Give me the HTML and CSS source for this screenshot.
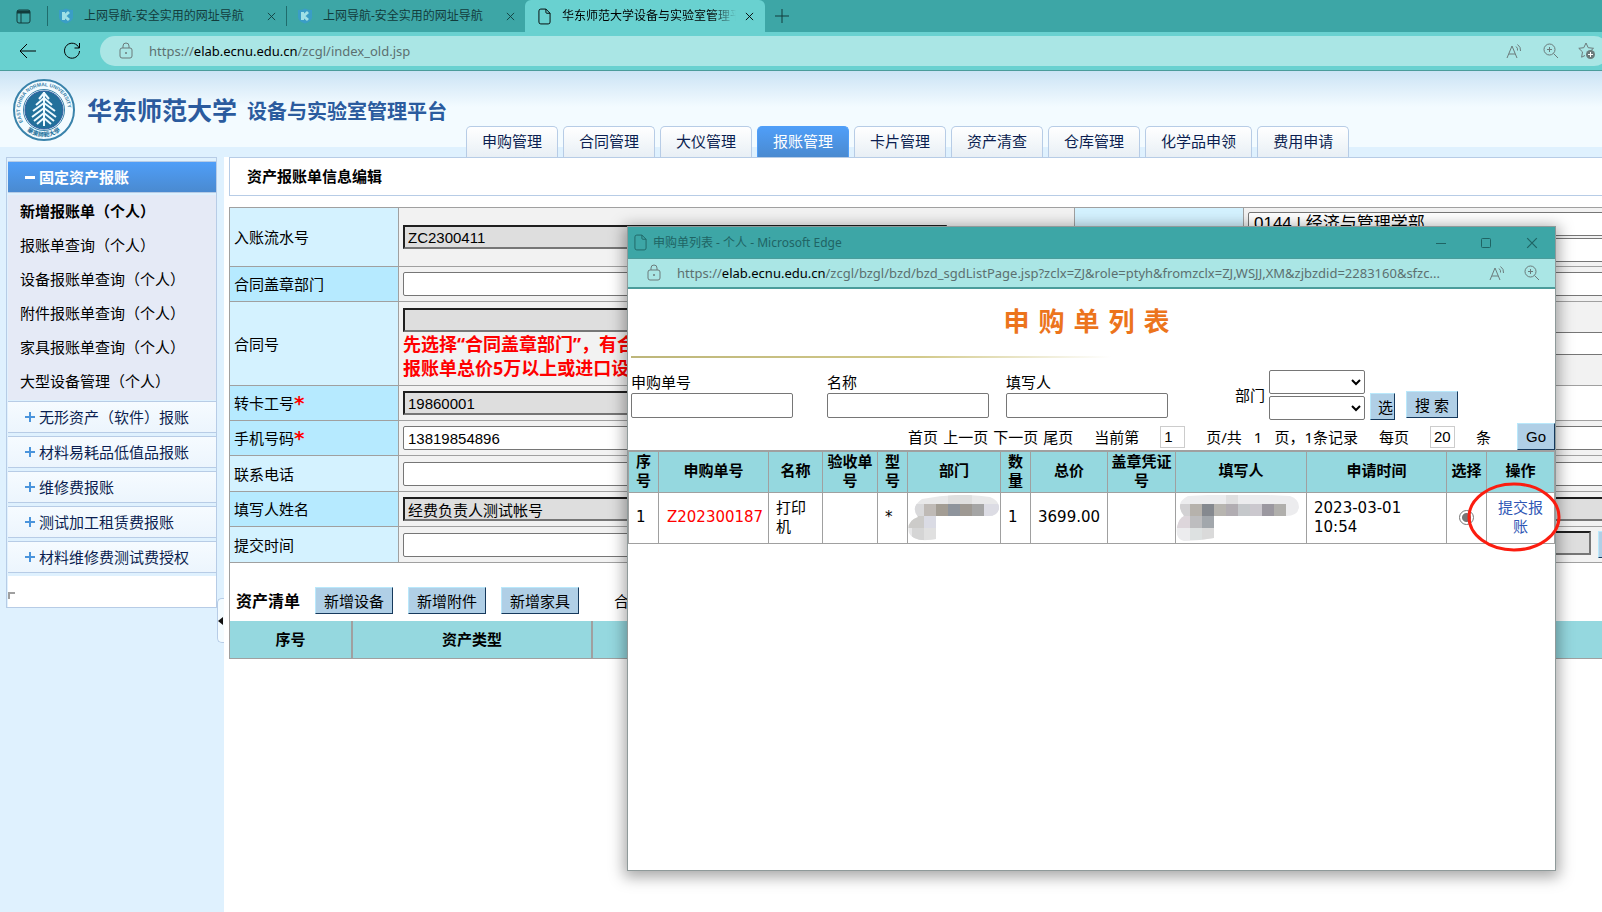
FILE: index.html
```
<!DOCTYPE html>
<html lang="zh-CN">
<head>
    <meta charset="UTF-8">
    <meta name="viewport" content="width=device-width, initial-scale=1.0">
    <title>华东师范大学设备与实验室管理平台</title>
    <link rel="stylesheet" href="styles.css">
</head>
<body>
    <svg class="defs" aria-hidden="true">
        <symbol id="i-close" viewBox="0 0 10 10"><path d="M1 1l8 8M9 1l-8 8"/></symbol>
        <symbol id="i-page" viewBox="0 0 14 18"><path d="M3 1h5.500l4.500 4.500V15a2 2 0 0 1-2 2H3a2 2 0 0 1-2-2V3a2 2 0 0 1 2-2zM8.500 1v3.500a1 1 0 0 0 1 1H13"/></symbol>
        <symbol id="i-lock" viewBox="0 0 14 18"><rect x="1" y="6" width="12" height="10" rx="2"/><path d="M4 6V4a3 3 0 0 1 6 0v2"/><circle cx="7" cy="11" r="1" class="solid"/></symbol>
        <symbol id="i-zoom" viewBox="0 0 16 16"><circle cx="6.500" cy="6.500" r="5.500"/><path d="M10.500 10.500L15 15M6.500 4v5M4 6.500h5"/></symbol>
        <symbol id="i-read" viewBox="0 0 18 16"><path d="M1 15L6 3l5 12M3 11h6M10 3.500q2 1.500 1.500 4M11.500 1.500q3.500 2.500 3 6.500"/></symbol>
        <symbol id="i-k" viewBox="0 0 16 16"><path class="shield" d="M1 2q4 0 7-1.500Q11 2 15 2v7q0 4-7 6.500Q1 13 1 9z"/><path class="k" d="M5.500 4v8M11 4L6.500 8l4.500 4"/></symbol>
    </svg>

    <div class="tabbar">
        <button class="tab-menu" aria-label="标签操作">
            <svg width="15" height="15" viewBox="0 0 15 15"><rect x="1" y="1" width="13" height="13" rx="2"/><path class="thick" d="M1 3h13"/><path d="M5 4v10"/></svg>
        </button>
        <div class="btab">
            <svg class="k-icon" width="16" height="16"><use href="#i-k"/></svg>
            <span>上网导航-安全实用的网址导航</span>
            <button aria-label="关闭"><svg width="9" height="9"><use href="#i-close"/></svg></button>
        </div>
        <div class="btab">
            <svg class="k-icon" width="16" height="16"><use href="#i-k"/></svg>
            <span>上网导航-安全实用的网址导航</span>
            <button aria-label="关闭"><svg width="9" height="9"><use href="#i-close"/></svg></button>
        </div>
        <div class="btab active">
            <svg width="13" height="17"><use href="#i-page"/></svg>
            <span>华东师范大学设备与实验室管理平台</span>
            <button aria-label="关闭"><svg width="9" height="9"><use href="#i-close"/></svg></button>
        </div>
        <button class="tab-add" aria-label="新建标签页"><svg width="14" height="14" viewBox="0 0 14 14"><path d="M7 0v14M0 7h14"/></svg></button>
    </div>

    <div class="toolbar">
        <button aria-label="后退"><svg width="18" height="16" viewBox="0 0 18 16"><path d="M17 8H1M8 1L1 8l7 7"/></svg></button>
        <button aria-label="刷新"><svg width="18" height="18" viewBox="0 0 18 18"><path d="M16 6A7.500 7.500 0 1 0 16.500 9M16.500 1v5h-5"/></svg></button>
        <div class="address">
            <svg width="14" height="18"><use href="#i-lock"/></svg>
            <p class="url">https://<b>elab.ecnu.edu.cn</b>/zcgl/index_old.jsp</p>
            <svg width="18" height="16"><use href="#i-read"/></svg>
            <svg width="16" height="16"><use href="#i-zoom"/></svg>
            <svg width="18" height="18" viewBox="0 0 18 18"><path d="M8 1l2.200 4.700 5.300.6-3.900 3.500M8 1L5.800 5.700.8 6.300l3.700 3.600-.9 5.300L7 13.500"/><circle class="solid" cx="12.500" cy="12.500" r="4.500"/><path class="plus" d="M12.500 10v5M10 12.500h5"/></svg>
        </div>
    </div>

    <header class="header">
        <div class="brand">
            <svg class="logo" width="62" height="62" viewBox="0 0 62 62">
                <circle cx="31" cy="31" r="30" fill="#f3fbff" stroke="#3a83ab" stroke-width="2"/>
                <circle cx="31" cy="31" r="19" fill="#22709b"/>
                <circle cx="31" cy="31" r="20.500" fill="none" stroke="#3a83ab"/>
                <path id="ring" d="M10.100 43A24 24 0 1 1 51.900 43" fill="none" stroke="none"/>
                <path id="ring2" d="M9 47A28 28 0 0 0 53 47" fill="none" stroke="none"/>
                <text class="ring-text"><textPath href="#ring">EAST CHINA NORMAL UNIVERSITY</textPath></text>
                <text class="ring-cn"><textPath href="#ring2" startOffset="7">華東師範大學</textPath></text>
                <g fill="none" stroke="#eefaff" stroke-width="2">
                    <path d="M31 13v34"/>
                    <path d="M31 14l-5 6M31 14l5 6M31 19l-8 7M31 19l8 7M31 24l-11 8M31 24l11 8M31 29l-12 9M31 29l12 9M31 34l-10 8M31 34l10 8M31 39l-7 6M31 39l7 6"/>
                </g>
            </svg>
            <h1>华东师范大学</h1>
            <h2>设备与实验室管理平台</h2>
        </div>
        <nav class="nav">
            <a href="#">申购管理</a>
            <a href="#">合同管理</a>
            <a href="#">大仪管理</a>
            <a href="#" class="on">报账管理</a>
            <a href="#">卡片管理</a>
            <a href="#">资产清查</a>
            <a href="#">仓库管理</a>
            <a href="#">化学品申领</a>
            <a href="#">费用申请</a>
        </nav>
    </header>

    <div class="main">
        <aside class="side">
            <div class="menu">
                <button class="head open"><i class="minus"></i>固定资产报账</button>
                <ul>
                    <li><a href="#" class="cur">新增报账单（个人）</a></li>
                    <li><a href="#">报账单查询（个人）</a></li>
                    <li><a href="#">设备报账单查询（个人）</a></li>
                    <li><a href="#">附件报账单查询（个人）</a></li>
                    <li><a href="#">家具报账单查询（个人）</a></li>
                    <li><a href="#">大型设备管理（个人）</a></li>
                </ul>
                <button class="head"><i class="cross"></i>无形资产（软件）报账</button>
                <button class="head"><i class="cross"></i>材料易耗品低值品报账</button>
                <button class="head"><i class="cross"></i>维修费报账</button>
                <button class="head"><i class="cross"></i>测试加工租赁费报账</button>
                <button class="head"><i class="cross"></i>材料维修费测试费授权</button>
                <div class="menu-foot"></div>
            </div>
            <button class="fold" aria-label="收起菜单"></button>
        </aside>

        <section class="content">
            <h3 class="page-title">资产报账单信息编辑</h3>
            <table class="form">
                <colgroup><col class="c-label"><col class="c-value"><col class="c-label"><col></colgroup>
                <tr class="tall">
                    <th><label for="lsh">入账流水号</label></th>
                    <td><input id="lsh" class="ro" type="text" value="ZC2300411" readonly></td>
                    <th></th>
                    <td>
                        <select aria-label="部门"><option>0144 | 经济与管理学部</option></select>
                        <select aria-label="下级部门"><option></option></select>
                    </td>
                </tr>
                <tr class="deep">
                    <th><label for="bm">合同盖章部门</label></th>
                    <td><input id="bm" type="text"></td>
                    <th></th>
                    <td><input type="text" aria-label="合同部门"></td>
                </tr>
                <tr class="contract">
                    <th><label for="hth">合同号</label></th>
                    <td>
                        <input id="hth" class="ro" type="text" readonly>
                        <p class="warn">先选择“合同盖章部门”，有合同<br>报账单总价5万以上或进口设备</p>
                    </td>
                    <th></th>
                    <td><input class="slim" type="text" aria-label="合同名称"></td>
                </tr>
                <tr class="deep">
                    <th><label for="gh">转卡工号<em>*</em></label></th>
                    <td><input id="gh" class="ro" type="text" value="19860001" readonly></td>
                    <th></th>
                    <td class="blank"></td>
                </tr>
                <tr class="deep">
                    <th><label for="sj">手机号码<em>*</em></label></th>
                    <td><input id="sj" type="text" value="13819854896"></td>
                    <th></th>
                    <td><input type="text" aria-label="邮箱"></td>
                </tr>
                <tr>
                    <th><label for="dh">联系电话</label></th>
                    <td><input id="dh" type="text"></td>
                    <th></th>
                    <td><input type="text" aria-label="备用电话"></td>
                </tr>
                <tr class="deep">
                    <th><label for="xm">填写人姓名</label></th>
                    <td><input id="xm" class="ro" type="text" value="经费负责人测试帐号" readonly></td>
                    <th></th>
                    <td><input class="ro" type="text" aria-label="填写人工号" readonly></td>
                </tr>
                <tr>
                    <th><label for="tj">提交时间</label></th>
                    <td><input id="tj" type="text"></td>
                    <th></th>
                    <td><div class="pick"><input class="ro" type="text" aria-label="负责人" readonly><button class="btn" aria-label="选择"></button></div></td>
                </tr>
            </table>
            <div class="list">
                <div class="list-bar">
                    <h4>资产清单</h4>
                    <button class="btn">新增设备</button>
                    <button class="btn">新增附件</button>
                    <button class="btn">新增家具</button>
                    <span>合计</span>
                </div>
                <table class="assets">
                    <colgroup><col class="a-no"><col class="a-type"><col></colgroup>
                    <tr><th>序号</th><th>资产类型</th><th></th></tr>
                </table>
            </div>
        </section>
    </div>

    <div class="popup">
        <div class="pop-title">
            <svg width="13" height="17"><use href="#i-page"/></svg>
            <span>申购单列表 - 个人 - Microsoft Edge</span>
            <button aria-label="最小化"><svg width="10" height="10" viewBox="0 0 10 10"><path d="M0 5.500h10"/></svg></button>
            <button aria-label="最大化"><svg width="10" height="10" viewBox="0 0 10 10"><rect x=".5" y=".5" width="9" height="9" rx="1"/></svg></button>
            <button aria-label="关闭"><svg width="12" height="12"><use href="#i-close"/></svg></button>
        </div>
        <div class="pop-url">
            <svg width="14" height="18"><use href="#i-lock"/></svg>
            <p class="url">https://<b>elab.ecnu.edu.cn</b>/zcgl/bzgl/bzd/bzd_sgdListPage.jsp?zclx=ZJ&amp;role=ptyh&amp;fromzclx=ZJ,WSJJ,XM&amp;zjbzdid=2283160&amp;sfzc...</p>
            <svg width="18" height="16"><use href="#i-read"/></svg>
            <svg width="16" height="16"><use href="#i-zoom"/></svg>
        </div>
        <h2 class="pop-head">申 购 单 列 表</h2>
        <div class="rule"></div>
        <form class="search">
            <div class="field f1"><label for="q1">申购单号</label><input id="q1" type="text"></div>
            <div class="field f2"><label for="q2">名称</label><input id="q2" type="text"></div>
            <div class="field f3"><label for="q3">填写人</label><input id="q3" type="text"></div>
            <label class="dept" for="q4">部门</label>
            <div class="selects">
                <select id="q4"><option></option></select>
                <select aria-label="下级部门"><option></option></select>
            </div>
            <button type="button" class="btn pick-btn">选</button>
            <button type="button" class="btn go-search">搜 索</button>
        </form>
        <div class="pager">
            <p class="links"><a href="#">首页</a><a href="#">上一页</a><a href="#">下一页</a><a href="#">尾页</a></p>
            <label for="pg">当前第</label>
            <input id="pg" type="text" value="1">
            <p>页/共<span class="total">1</span>页，1条记录</p>
            <label for="ps">每页</label>
            <input id="ps" type="text" value="20">
            <span>条</span>
            <button class="btn go">Go</button>
        </div>
        <table class="orders">
            <colgroup>
                <col class="w30"><col class="w110"><col class="w54"><col class="w55"><col class="w30"><col class="w93"><col class="w30"><col class="w77"><col class="w68"><col class="w131"><col class="w140"><col class="w40"><col>
            </colgroup>
            <thead>
                <tr><th>序号</th><th>申购单号</th><th>名称</th><th>验收单号</th><th>型号</th><th>部门</th><th>数量</th><th>总价</th><th>盖章凭证号</th><th>填写人</th><th>申请时间</th><th>选择</th><th>操作</th></tr>
            </thead>
            <tbody>
                <tr>
                    <td>1</td>
                    <td class="red">Z202300187</td>
                    <td>打印机</td>
                    <td></td>
                    <td>*</td>
                    <td class="masked">
                        <svg width="91" height="46" viewBox="0 0 91 46">
                            <clipPath id="m1"><path d="M14 4Q50-3 82 2Q92 6 91 14Q89 22 78 21H28V44Q6 48 1 38Q-2 26 10 22Q2 12 14 4z"/></clipPath>
                            <g clip-path="url(#m1)">
                                <rect width="91" height="46" fill="#e8e8e9"/><rect x="40" width="24" height="9" fill="#dfdfdf"/>
                                <rect x="6" y="9" width="10" height="12" fill="#d9d9db"/><rect x="16" y="9" width="12" height="12" fill="#bfbab6"/><rect x="28" y="9" width="12" height="12" fill="#a39d94"/><rect x="40" y="9" width="12" height="12" fill="#8e949c"/><rect x="52" y="9" width="12" height="12" fill="#9e9993"/><rect x="64" y="9" width="12" height="12" fill="#a5a5a5"/><rect x="76" y="9" width="15" height="12" fill="#dcdce4"/>
                                <rect y="21" width="16" height="12" fill="#cccbc9"/><rect x="16" y="21" width="12" height="12" fill="#dadbe4"/><rect x="4" y="33" width="12" height="12" fill="#d5d5d5"/><rect x="16" y="33" width="12" height="12" fill="#e0e0e0"/>
                            </g>
                        </svg>
                    </td>
                    <td>1</td>
                    <td>3699.00</td>
                    <td></td>
                    <td class="masked">
                        <svg width="124" height="46" viewBox="0 0 124 46">
                            <clipPath id="m2"><path d="M12 1Q60-2 114 1Q123 4 123 12Q122 21 110 21H38V43Q20 46 8 46Q-1 44 1 32Q3 23 8 21Q-2 8 12 1z"/></clipPath>
                            <g clip-path="url(#m2)">
                                <rect width="124" height="46" fill="#ececee"/><rect x="50" width="12" height="9" fill="#dfdfe0"/>
                                <rect x="4" y="9" width="10" height="12" fill="#d2d1d3"/><rect x="14" y="9" width="12" height="12" fill="#b6b2ac"/><rect x="26" y="9" width="12" height="12" fill="#85898f"/><rect x="38" y="9" width="12" height="12" fill="#b7b5b0"/><rect x="50" y="9" width="12" height="12" fill="#b1adb2"/><rect x="62" y="9" width="12" height="12" fill="#c5c8cb"/><rect x="74" y="9" width="12" height="12" fill="#cbc8ce"/><rect x="86" y="9" width="12" height="12" fill="#9b98a0"/><rect x="98" y="9" width="12" height="12" fill="#b0afac"/>
                                <rect y="21" width="14" height="12" fill="#ddd6db"/><rect x="14" y="21" width="12" height="12" fill="#bdbdbf"/><rect x="26" y="21" width="12" height="12" fill="#a2a7ac"/><rect x="14" y="33" width="12" height="12" fill="#dde1e1"/><rect x="26" y="33" width="12" height="12" fill="#dadada"/>
                            </g>
                        </svg>
                    </td>
                    <td>2023-03-01 10:54</td>
                    <td class="mid"><input type="radio" name="pick" aria-label="选择申购单" checked></td>
                    <td class="mid op"><a href="#">提交报账</a><svg class="circle" width="94" height="72" viewBox="0 0 94 72"><ellipse cx="47" cy="36" rx="45" ry="33"/></svg></td>
                </tr>
            </tbody>
        </table>
    </div>
</body>
</html>
```
FILE: styles.css
```
* {
    box-sizing: border-box;
}

body {
    margin: 0;
    min-height: 100vh;
    display: flex;
    flex-direction: column;
    position: relative;
    overflow-x: hidden;
    background: #fff;
    color: #000;
    font-family: "Noto Sans", "Noto Sans CJK SC", sans-serif;
    font-size: 15px;
    line-height: 20px;
}

h1, h2, h3, h4, p, ul {
    margin: 0;
    padding: 0;
}

a {
    color: inherit;
    text-decoration: none;
}

button, input, select {
    font: inherit;
    color: inherit;
}

button {
    padding: 0;
    border: 0;
    background: none;
}

svg {
    flex: none;
    fill: none;
    stroke: currentColor;
}

.defs {
    position: absolute;
    width: 0;
    height: 0;
}

.solid {
    fill: currentColor;
    stroke: none;
}

/* browser tabs */
.tabbar {
    display: flex;
    height: 32px;
    background: #3da6a6;
    color: #123c3c;
    font-size: 12px;
}

.tab-menu {
    width: 47px;
    display: flex;
    align-items: center;
    justify-content: center;
}

.tab-menu .thick {
    stroke-width: 3;
}

.btab {
    width: 239px;
    display: flex;
    align-items: center;
    padding: 0 10px 0 11px;
    position: relative;
}

.btab::before {
    content: "";
    position: absolute;
    left: 0;
    top: 6px;
    height: 20px;
    border-left: 1px solid #1f6c6c;
}

.btab span {
    flex: 1;
    margin: 0 10px;
    overflow: hidden;
    white-space: nowrap;
}

.btab button {
    display: flex;
}

.btab.active {
    width: 240px;
    padding: 0 11px 0 13px;
    background: #69d1d0;
    border-radius: 6px 6px 0 0;
    color: #000;
}

.btab.active::before {
    display: none;
}

.btab.active span {
    margin: 0 9px 0 11px;
    -webkit-mask-image: linear-gradient(to right, #000 85%, transparent);
    mask-image: linear-gradient(to right, #000 85%, transparent);
}

.shield {
    fill: #3a9dc6;
    stroke: none;
}

.k {
    stroke: #9fe0e6;
    stroke-width: 3;
}

.tab-add {
    width: 34px;
    display: flex;
    align-items: center;
    justify-content: center;
}

.toolbar {
    height: 39px;
    display: flex;
    align-items: center;
    background: #69d1d0;
    border-bottom: 1px solid #4b9c9b;
    overflow: hidden;
}

.toolbar > button {
    display: flex;
    margin-left: 19px;
}

.toolbar > button + button {
    margin: 0 19px 0 26px;
}

.address {
    flex: 1;
    height: 30px;
    margin-right: -7px;
    padding: 0 13px 0 19px;
    display: flex;
    align-items: center;
    gap: 19px;
    border-radius: 15px;
    background: #aae6e5;
    color: #6b7b7b;
}

.address .url {
    margin-left: -3px;
}

.url {
    flex: 1;
    overflow: hidden;
    white-space: nowrap;
    font-family: "Noto Sans", sans-serif;
    font-size: 13px;
    color: #5c7070;
}

.url b {
    font-weight: normal;
    color: #000;
}

.address .plus {
    stroke: #fff;
}

/* site header */
.header {
    display: flex;
    align-items: flex-end;
    height: 86px;
    background: linear-gradient(#cbe3f5, #f3fbff 36px, #f3fbff 76px, #dff1fe 76px);
}

.brand {
    width: 466px;
    height: 86px;
    flex: none;
    padding: 8px 0 0 13px;
    display: flex;
    align-items: flex-start;
    color: #2b5b9e;
}

.brand h1 {
    margin-left: 12px;
    font-size: 25px;
    line-height: 62px;
}

.brand h2 {
    margin-left: 10px;
    font-size: 20px;
    line-height: 66px;
}

.ring-text {
    font: bold 5px "Liberation Sans", sans-serif;
    fill: #3a83ab;
    stroke: none;
}

.ring-cn {
    font: bold 6px "Noto Sans CJK SC", sans-serif;
    fill: #22709b;
    stroke: none;
}

.nav {
    display: flex;
    gap: 5px;
}

.nav a {
    height: 31px;
    padding: 0 15px;
    border: 1px solid #b7cce6;
    border-bottom: 0;
    border-radius: 5px 5px 0 0;
    background: linear-gradient(#fff, #e8eff5);
    color: #0b1e50;
    line-height: 28px;
    white-space: nowrap;
}

.nav .on {
    background: linear-gradient(#4f9ef8, #4a8ad0);
    border-color: #4f9ef8;
    color: #fff;
}

.main {
    flex: 1;
    display: flex;
}

/* left menu */
.side {
    width: 224px;
    flex: none;
    display: flex;
    align-items: flex-start;
    padding-left: 6px;
    background: #dff1fe;
}

.menu {
    width: 211px;
    flex: none;
    padding: 3px 0 0 1px;
    border: 1px solid #b7cce6;
}

.head {
    width: 100%;
    height: 32px;
    display: flex;
    align-items: center;
    gap: 4px;
    padding-left: 17px;
    margin-bottom: 3px;
    border: 1px solid #b7cce6;
    border-width: 1px 0;
    background: linear-gradient(#f6fbff, #ecf5fd);
    color: #0b1e50;
    white-space: nowrap;
}

.head.open {
    margin-bottom: 2px;
    background: linear-gradient(#4f9ef8, #4a8ad0);
    color: #fff;
    font-weight: bold;
}

.minus {
    width: 10px;
    height: 3px;
    background: #fff;
}

.cross {
    width: 10px;
    height: 10px;
    background: linear-gradient(#4a94dc, #4a94dc) center / 10px 2px no-repeat, linear-gradient(#4a94dc, #4a94dc) center / 2px 10px no-repeat;
}

.menu ul {
    list-style: none;
    padding: 0 0 1px 12px;
    margin-bottom: 1px;
    background: #e5eaf6;
}

.menu li {
    height: 34px;
    line-height: 33px;
}

.menu ul .cur {
    font-weight: bold;
}

.menu-foot {
    height: 31px;
    padding-top: 16px;
    background: #fff;
}

.menu-foot::before {
    content: "";
    display: block;
    width: 5px;
    height: 5px;
    border: 2px solid #a0a0a0;
    border-width: 2px 0 0 2px;
}

.fold {
    width: 7px;
    height: 45px;
    margin-top: 441px;
    border: 1px solid #b7cce6;
    border-right: 0;
    border-radius: 5px 0 0 5px;
    background: #f3fbff;
    display: flex;
    align-items: center;
}

.fold::before {
    content: "";
    border: 4px solid transparent;
    border-left: 0;
    border-right: 5px solid #111;
}

/* right side */
.content {
    flex: 1;
    min-width: 0;
    padding-left: 5px;
}

.page-title {
    height: 39px;
    margin-bottom: 11px;
    padding-left: 17px;
    border: 1px solid #b7cce6;
    border-right: 0;
    font-size: 15px;
    line-height: 37px;
}

.form {
    width: 100%;
    table-layout: fixed;
    border-collapse: collapse;
}

.c-label {
    width: 169px;
}

.c-value {
    width: 676px;
}

.form th, .form td {
    height: 36px;
    padding: 0 4px;
    border: 1px solid #a0a0a0;
    border-right: 0;
    text-align: left;
    font-weight: normal;
    background: #f2f2f2;
    overflow: hidden;
}

.form th {
    background: #d4f2ff;
}

.form .deep th {
    background: #b6eaff;
}

.form .deep td, .form .deep th {
    height: 35px;
}

.form .tall td {
    height: 59px;
}

.form .contract td {
    height: 84px;
}

.form .blank {
    background: #fff;
}

.form em {
    color: #f00;
    font: bold 20px/20px "DejaVu Sans", sans-serif;
    vertical-align: top;
}

.form input, .form select {
    display: block;
    width: 544px;
    height: 24px;
    padding: 0 3px;
    border: 1px solid #767676;
    border-radius: 2px;
    background: #fff;
    font-family: "Liberation Sans", "Noto Sans CJK SC", sans-serif;
}

.form input {
    padding: 0 4px;
}

.form .ro {
    padding: 0 3px;
    border: 2px solid;
    border-color: #1f1f1f #767676 #767676 #1f1f1f;
    border-radius: 0;
    background: #dedede;
}

.form .slim {
    height: 23px;
}

.form select {
    appearance: none;
    margin: 2px 0;
    padding: 0 5px;
    font-size: 17px;
}

.form .warn {
    color: #f00;
    font-weight: bold;
    font-size: 18px;
    line-height: 24px;
    white-space: nowrap;
}

.pick {
    display: flex;
    gap: 7px;
}

.form .pick input {
    width: 343px;
    flex: none;
}

.btn {
    height: 27px;
    padding: 0 8px;
    flex: none;
    border: 1px solid;
    border-color: #b9e8fb #16395c #16395c #b9e8fb;
    background: #b0cfe6;
    line-height: 24px;
    white-space: nowrap;
}

.list {
    border-left: 1px solid #a0a0a0;
}

.list-bar {
    height: 58px;
    padding: 17px 0 0 6px;
    display: flex;
    align-items: center;
    gap: 15px;
}

.list-bar h4 {
    font-size: 16px;
}

.list-bar span {
    margin-left: 20px;
}

.assets {
    width: 100%;
    table-layout: fixed;
    border-collapse: collapse;
}

.a-no {
    width: 122px;
}

.a-type {
    width: 240px;
}

.assets th {
    height: 37px;
    padding: 0;
    background: #95d8df;
    border-bottom: 1px solid #a0a0a0;
    border-left: 2px solid #a0a0a0;
}

.assets th:first-child {
    border-left: 0;
}

/* popup window */
.popup {
    position: absolute;
    left: 628px;
    top: 227px;
    width: 927px;
    height: 643px;
    background: #fff;
    box-shadow: 0 0 0 1px #8f9a9a, 0 3px 14px 4px rgba(0, 0, 0, 0.35);
}

.pop-title {
    height: 31px;
    padding: 0 17px 0 6px;
    display: flex;
    align-items: center;
    background: #3da6a6;
    color: #1f6464;
    font-size: 12px;
}

.pop-title span {
    flex: 1;
    margin-left: 6px;
}

.pop-title button {
    display: flex;
    margin-left: 35px;
}

.pop-url {
    height: 31px;
    padding: 0 15px 0 19px;
    display: flex;
    align-items: center;
    gap: 16px;
    background: #aae6e5;
    border-top: 1px solid #4b9c9b;
    border-bottom: 2px solid #4b9c9b;
    color: #6b7b7b;
}

.pop-url svg:nth-of-type(2) {
    margin-right: 1px;
}

.pop-head {
    padding: 13px 10px 0 0;
    color: #ec741c;
    font-family: "DejaVu Sans", "Noto Sans CJK SC", sans-serif;
    font-size: 26px;
    line-height: 40px;
    text-align: center;
}

.rule {
    width: 480px;
    height: 2px;
    margin: 14px 0 0 3px;
    background: linear-gradient(to right, #bdb67a, #d2c98a 60%, transparent);
}

.search {
    margin: 12px 0 0 3px;
    display: flex;
    align-items: flex-end;
}

.field {
    display: flex;
    flex-direction: column;
    padding-bottom: 2px;
}

.field label {
    line-height: 21px;
}

.field input {
    width: 162px;
    height: 25px;
    border: 1px solid #767676;
    border-radius: 2px;
}

.f1 {
    margin-right: 34px;
}

.f2 {
    margin-right: 17px;
}

.dept {
    margin: 0 4px 15px 67px;
}

.selects {
    width: 96px;
    display: grid;
    gap: 2px;
}

.selects select {
    height: 24px;
    border: 1px solid #767676;
    border-radius: 2px;
    background: #fff;
}

.pick-btn {
    width: 25px;
    margin-left: 5px;
    padding: 0 7px;
    overflow: hidden;
}

.go-search {
    margin: 0 0 2px 11px;
}

.pager {
    height: 30px;
    display: flex;
    align-items: center;
    justify-content: flex-end;
    gap: 21px;
    padding-top: 3px;
    white-space: nowrap;
}

.links {
    display: flex;
    gap: 5px;
}

.pager input {
    width: 25px;
    height: 22px;
    padding: 0 3px;
    border: 1px solid #ccc;
    font-family: "Liberation Sans", sans-serif;
}

.pager .total {
    margin: 0 12px;
}

.pager .go {
    width: 38px;
    margin-left: 5px;
    font-family: "Liberation Sans", sans-serif;
}

.orders {
    width: 100%;
    table-layout: fixed;
    border-collapse: collapse;
    font-family: "DejaVu Sans", "Noto Sans CJK SC", sans-serif;
    line-height: 19px;
}

.orders th, .orders td {
    border: 1px solid #a0a0a0;
}

.orders th {
    height: 41px;
    padding: 0 3px;
    border-top-width: 2px;
    background: #95d8df;
}

.orders td {
    height: 51px;
    padding: 0 7px;
}

.orders .red {
    color: #f00;
    padding-left: 8px;
}

.orders .masked {
    padding: 0;
}

.masked svg {
    display: block;
    stroke: none;
}

.orders .mid {
    padding: 0 6px;
    text-align: center;
}

.mid input {
    appearance: none;
    width: 15px;
    height: 15px;
    margin: 0;
    border: 1px solid #767676;
    border-radius: 50%;
    background: radial-gradient(circle, #767676 4px, #fff 5px);
    vertical-align: middle;
}

.orders .op {
    position: relative;
    color: #2f57b5;
}

.circle {
    position: absolute;
    left: -20px;
    top: -12px;
    stroke: #fb1d10;
    stroke-width: 3;
    pointer-events: none;
}

.w30 { width: 30px; }
.w40 { width: 40px; }
.w54 { width: 54px; }
.w55 { width: 55px; }
.w68 { width: 68px; }
.w77 { width: 77px; }
.w93 { width: 93px; }
.w110 { width: 110px; }
.w131 { width: 131px; }
.w140 { width: 140px; }
```
